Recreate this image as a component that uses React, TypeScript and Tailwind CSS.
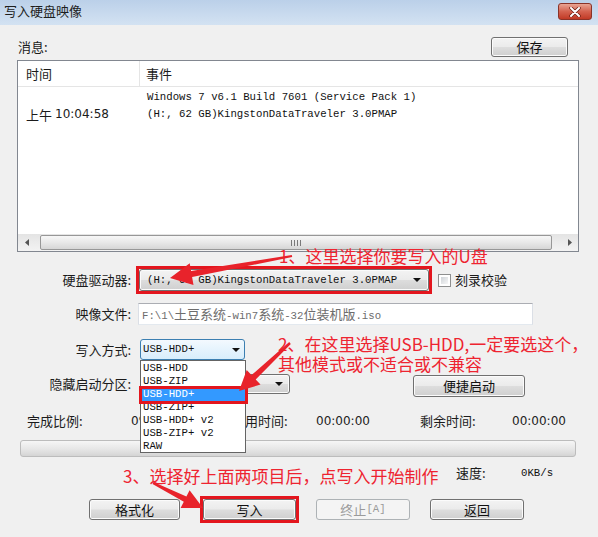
import React from 'react';

const cjk = "font-['Noto_Sans_CJK_SC','Liberation_Sans',sans-serif]";
const mono = "font-['Liberation_Mono','Noto_Sans_CJK_SC',monospace]";
const digits = "font-['DejaVu_Sans','Liberation_Sans',sans-serif]";

const btnSkin =
  'rounded-[3px] border border-[#707070] bg-[linear-gradient(#f3f3f3_0%,#ebebeb_48%,#dddddd_52%,#cfcfcf_100%)] shadow-[inset_0_0_0_1px_#fbfbfb]';

const DownArrow: React.FC = () => (
  <svg width="8" height="4" viewBox="0 0 8 4" className="shrink-0">
    <path d="M0 0h8L4 4z" fill="#111" />
  </svg>
);

const Button: React.FC<{ className?: string; disabled?: boolean; children: React.ReactNode }> = ({
  className = '',
  disabled = false,
  children,
}) =>
  disabled ? (
    <div
      className={`${className} rounded-[3px] border border-[#adb2b5] bg-[#f4f4f4] flex items-center justify-center text-[13px] text-[#9a9a9a]`}
    >
      {children}
    </div>
  ) : (
    <div className={`${className} ${btnSkin} flex items-center justify-center text-[13px] text-[#111]`}>
      {children}
    </div>
  );

const dropItems = ['USB-HDD', 'USB-ZIP', 'USB-HDD+', 'USB-ZIP+', 'USB-HDD+ v2', 'USB-ZIP+ v2', 'RAW'];

const App: React.FC = () => {
  return (
    <div className={`relative w-[598px] h-[537px] overflow-hidden bg-[#f0f0f0] text-[#1b1b1b] ${cjk}`}>
      {/* title bar */}
      <div className="h-[25px] flex items-start justify-between bg-[linear-gradient(#bbd0e9,#d3e2f2)]">
        <span className="pl-[4px] pt-[2px] text-[13px] leading-[18px] text-[#1e1e1e]">写入硬盘映像</span>
        <div className="mt-[3px] mr-[6px] w-[34px] h-[17px] rounded-[3px] border border-[#8a3328] bg-[linear-gradient(#e9a493,#d4624f_50%,#c13a26)] flex items-center justify-center">
          <svg width="12" height="10" viewBox="0 0 12 10">
            <path d="M2 1l8 8M10 1L2 9" stroke="#6b1d14" strokeWidth="3.4" strokeLinecap="round" />
            <path d="M2 1l8 8M10 1L2 9" stroke="#ffffff" strokeWidth="2" strokeLinecap="round" />
          </svg>
        </div>
      </div>

      <div className="pl-[17px]">
        {/* messages header */}
        <div className="mt-[12px] w-[562px] h-[20px] flex items-center justify-between">
          <span className="pl-[1px] text-[13px]">消息:</span>
          <Button className="w-[77px] h-[20px] mr-[11px]">保存</Button>
        </div>

        {/* log list */}
        <div className="mt-[3px] w-[562px] h-[192px] border border-[#828790] bg-white flex flex-col">
          <div className="h-[26px] shrink-0 border-b border-[#e5e5e5] flex text-[13px]">
            <div className="w-[122px] pl-[8px] border-r border-[#e5e5e5] flex items-center">时间</div>
            <div className="pl-[6px] flex items-center">事件</div>
          </div>
          <div className="flex-1 pt-[2px] flex leading-[17px]">
            <div className="w-[122px] pl-[8px]">
              <div className="h-[17px]" />
              <div className="h-[17px] flex items-center">
                <span className="text-[13px]">上午</span>
                <span className={`${digits} ml-[3px] text-[12px]`}>10:04:58</span>
              </div>
            </div>
            <div className={`pl-[7px] ${mono} text-[10.7px] text-[#111]`}>
              <div className="h-[17px] whitespace-pre">Windows 7 v6.1 Build 7601 (Service Pack 1)</div>
              <div className="h-[17px] whitespace-pre">(H:, 62 GB)KingstonDataTraveler 3.0PMAP</div>
            </div>
          </div>
          {/* horizontal scrollbar */}
          <div className="h-[17px] shrink-0 flex items-center bg-[linear-gradient(#e4e4e4,#f3f3f3)]">
            <div className="w-[17px] flex justify-center">
              <svg width="4" height="7" viewBox="0 0 4 7">
                <path d="M4 0v7L0 3.5z" fill="#555" />
              </svg>
            </div>
            <div className="ml-[5px] w-[512px] h-[15px] rounded-[2px] border border-[#979797] bg-[linear-gradient(#f7f7f7,#e8e8e8_50%,#d6d6d6)] flex items-center justify-center gap-[2px]">
              <span className="w-px h-[6px] bg-[#7a7a7a]" />
              <span className="w-px h-[6px] bg-[#7a7a7a]" />
              <span className="w-px h-[6px] bg-[#7a7a7a]" />
              <span className="w-px h-[6px] bg-[#7a7a7a]" />
            </div>
            <div className="flex-1" />
            <div className="w-[17px] flex justify-center">
              <svg width="4" height="7" viewBox="0 0 4 7">
                <path d="M0 0v7L4 3.5z" fill="#555" />
              </svg>
            </div>
          </div>
        </div>

        {/* drive */}
        <div className="mt-[14px] h-[28px] flex items-center">
          <span className="w-[114px] text-right text-[13px]">硬盘驱动器:</span>
          <div className="ml-[5px] border-[3px] border-[#e3161e]">
            <div
              className={`w-[290px] h-[22px] ${btnSkin} flex items-center justify-between pl-[7px] pr-[7px]`}
            >
              <span className={`${mono} text-[10.7px] text-[#111] whitespace-pre`}>(H:, 62 GB)KingstonDataTraveler 3.0PMAP</span>
              <DownArrow />
            </div>
          </div>
          <div className="ml-[6px] w-[13px] h-[13px] border border-[#8e8f8f] bg-white p-[2px]">
            <div className="w-full h-full bg-[linear-gradient(135deg,#cfd3d8,#f7f7f7)]" />
          </div>
          <span className="ml-[4px] text-[13px]">刻录校验</span>
        </div>

        {/* image file */}
        <div className="mt-[9px] h-[22px] flex items-center">
          <span className="w-[114px] text-right text-[13px]">映像文件:</span>
          <div className="ml-[7px] w-[395px] h-[22px] border border-[#abadb3] border-b-[#e3e9ef] border-x-[#dbdfe6] bg-white flex items-center pl-[3px] text-[#6d6d6d]">
            <span className={`${mono} text-[10.7px] whitespace-pre`}>
              {'F:\\1\\'}
              <span className={`${cjk} text-[13px]`}>土豆系统</span>
              -win7
              <span className={`${cjk} text-[13px]`}>系统</span>
              -32
              <span className={`${cjk} text-[13px]`}>位装机版</span>
              .iso
            </span>
          </div>
        </div>

        {/* write mode */}
        <div className="mt-[14px] h-[21px] flex items-center">
          <span className="w-[114px] text-right text-[13px]">写入方式:</span>
          <div className="ml-[9px] w-[105px] h-[21px] rounded-[3px] border border-[#3c7fb1] bg-[linear-gradient(#f3f9fe,#d8eefc)] flex items-center justify-between pl-[2px] pr-[4px]">
            <span className={`${mono} text-[10.7px] text-[#111]`}>USB-HDD+</span>
            <DownArrow />
          </div>
        </div>

        {/* hidden partition */}
        <div className="mt-[14px] h-[23px] flex items-start">
          <span className="w-[114px] text-right text-[13px] leading-[20px]">隐藏启动分区:</span>
          <div className={`ml-[9px] w-[150px] h-[20px] ${btnSkin} flex items-center justify-end pr-[6px]`}>
            <DownArrow />
          </div>
          <Button className="ml-[123px] mt-[1px] w-[112px] h-[22px]">便捷启动</Button>
        </div>

        {/* progress numbers */}
        <div className="mt-[16px] h-[16px] flex items-center text-[13px]">
          <span className="ml-[10px] w-[104px]">完成比例:</span>
          <span className={`${digits} w-[101px] text-[12px]`}>0%</span>
          <span className="w-[84px]">已用时间:</span>
          <span className={`${digits} w-[104px] text-[12px] text-[#222]`}>00:00:00</span>
          <span className="w-[92px]">剩余时间:</span>
          <span className={`${digits} text-[12px] text-[#222]`}>00:00:00</span>
        </div>

        {/* progress bar */}
        <div className="mt-[11px] ml-[3px] w-[556px] h-[17px] rounded-[3px] border border-[#bcbcbc] bg-[linear-gradient(#f6f6f6,#e6e6e6_55%,#d4d4d4)]" />

        {/* speed */}
        <div className="mt-[8px] h-[16px] flex items-center">
          <span className="ml-[439px] w-[65px] text-[13px]">速度:</span>
          <span className={`${mono} text-[10.7px] text-[#111]`}>0KB/s</span>
        </div>

        {/* buttons */}
        <div className="mt-[15px] h-[27px] flex items-center">
          <Button className="ml-[72px] w-[91px] h-[21px]">格式化</Button>
          <div className="ml-[20px] border-[3px] border-[#e3161e]">
            <Button className="w-[93px] h-[21px]">写入</Button>
          </div>
          <Button className="ml-[17px] w-[94px] h-[21px]" disabled>
            <span className={`${cjk}`}>终止</span>
            <span className={`${mono} text-[10.7px]`}>[A]</span>
          </Button>
          <Button className="ml-[20px] w-[94px] h-[21px]">返回</Button>
        </div>
      </div>

      {/* open dropdown list */}
      <div className="absolute left-[140px] top-[360px] w-[106px] h-[93px] border border-[#646464] bg-white pt-px">
        {dropItems.map((item, i) => (
          <div
            key={item}
            className={`h-[13px] leading-[13px] pl-[2px] ${mono} text-[10.7px] whitespace-pre ${
              i === 2 ? 'bg-[#3399ff] text-white' : 'text-[#111]'
            }`}
          >
            {item}
          </div>
        ))}
      </div>
      <div className="absolute left-[139px] top-[386px] w-[109px] h-[18px] border-[3px] border-[#e3161e]" />

      {/* annotations */}
      <div className="absolute left-[279px] top-[246px] text-[17px] leading-[20px] text-[#ee2430] whitespace-nowrap">
        1、这里选择你要写入的U盘
      </div>
      <div className="absolute left-[278px] top-[334px] text-[17px] leading-[20px] text-[#ee2430] whitespace-nowrap">
        <div>2、在这里选择USB-HDD,一定要选这个，</div>
        <div>其他模式或不适合或不兼容</div>
      </div>
      <div className="absolute left-[123px] top-[466px] text-[17px] leading-[20px] text-[#ee2430] whitespace-nowrap">
        3、选择好上面两项目后，点写入开始制作
      </div>

      <svg className="absolute left-0 top-0 pointer-events-none" width="598" height="537" viewBox="0 0 598 537">
        <polygon
          points="291.8,255 191.1,271.1 189.7,263.3 170,278 193.5,284.9 192.1,277.1 292.2,257"
          fill="#e8232b"
        />
        <polygon
          points="289.2,342.1 251.5,375.1 246.7,370 239,391 260.5,384.6 255.7,379.5 290.8,343.9"
          fill="#e8232b"
        />
        <polygon
          points="153.5,481.9 186.4,496.4 189.6,490.2 203,508 180.6,508 183.8,501.8 152.5,484.1"
          fill="#e8232b"
        />
      </svg>
    </div>
  );
};

export default App;
